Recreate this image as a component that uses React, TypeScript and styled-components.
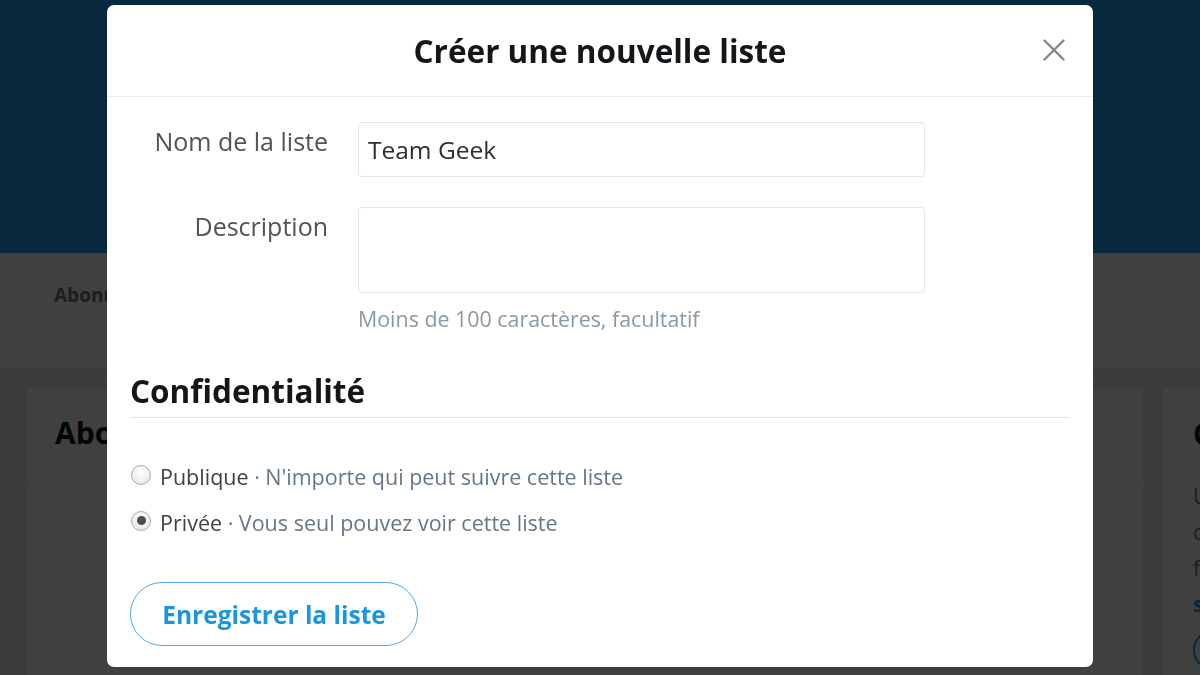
import React from 'react'
import styled, { createGlobalStyle } from 'styled-components'

const GlobalStyle = createGlobalStyle`
  html, body {
    margin: 0;
    padding: 0;
    width: 1200px;
    height: 675px;
    overflow: hidden;
    font-family: 'Open Sans', 'Noto Sans', 'Liberation Sans', sans-serif;
  }
  * { box-sizing: border-box; }
`

/* ---------- page behind the dialog ---------- */

const Page = styled.div`
  width: 1200px;
  height: 675px;
  background: #e6ecf0;
  display: flex;
  flex-direction: column;
`
const Banner = styled.div`
  height: 253px;
  background: #1da1f2;
`
const NavBar = styled.div`
  height: 116px;
  background: #fff;
  border-bottom: 1px solid #d8dee3;
  padding: 24px 0 0 54px;
`
const NavItem = styled.div`
  font-size: 19px;
  font-weight: 700;
  color: #657786;
  line-height: 36px;
`
const Main = styled.div`
  flex: 1;
  display: flex;
  gap: 20px;
  padding: 19px 0 0 27px;
`
const WideCard = styled.div`
  flex: 0 0 1116px;
  background: #fff;
  display: flex;
  flex-direction: column;
`
const CardHeader = styled.div`
  height: 99px;
  padding: 24px 0 0 28px;
  border-bottom: 1px solid #e6ecf0;
  font-size: 30px;
  font-weight: 700;
  color: #14171a;
`
const SideCard = styled.div`
  flex: 1;
  min-width: 0;
  overflow: hidden;
  background: #fff;
  padding: 24px 0 0 30px;
  display: flex;
  flex-direction: column;
`
const SideTitle = styled.div`
  font-size: 30px;
  font-weight: 700;
  color: #14171a;
  line-height: 44px;
  margin-bottom: 22px;
`
const SideLine = styled.div<{ $link?: boolean }>`
  font-size: 21px;
  line-height: 36px;
  color: ${(p) => (p.$link ? '#1b95e0' : '#657786')};
  font-weight: ${(p) => (p.$link ? 700 : 400)};
  white-space: nowrap;
`
const SideCircle = styled.div`
  margin-top: 8px;
  width: 40px;
  height: 40px;
  flex: 0 0 40px;
  border: 2px solid #1da1f2;
  border-radius: 20px;
`

/* ---------- dialog ---------- */

const Overlay = styled.div`
  position: fixed;
  inset: 0;
  background: rgba(0, 0, 0, 0.75);
  display: flex;
  justify-content: center;
  align-items: flex-start;
  padding-top: 5px;
`
const Dialog = styled.div`
  width: 986px;
  height: 662px;
  background: #fff;
  border-radius: 7px;
  overflow: hidden;
  display: flex;
  flex-direction: column;
`
const Header = styled.div`
  height: 92px;
  flex: 0 0 92px;
  border-bottom: 1px solid #e6ecf0;
  display: grid;
  grid-template-columns: 80px 1fr 80px;
  align-items: center;
`
const Title = styled.h2`
  grid-column: 2;
  margin: 0;
  text-align: center;
  font-size: 31.5px;
  font-weight: 700;
  color: #14171a;
`
const CloseButton = styled.button`
  justify-self: center;
  margin-left: 2px;
  margin-top: -2px;
  border: 0;
  background: transparent;
  padding: 0;
  width: 24px;
  height: 24px;
  display: flex;
  align-items: center;
  justify-content: center;
  cursor: pointer;
`
const Body = styled.div`
  padding: 25px 23px 0 23px;
  display: flex;
  flex-direction: column;
`
const FieldRow = styled.div`
  display: grid;
  grid-template-columns: 198px 567px;
  column-gap: 30px;
  margin-bottom: 30px;
`
const Label = styled.label`
  text-align: right;
  font-size: 25px;
  line-height: 32px;
  padding-top: 3px;
  color: #4f5459;
  white-space: nowrap;
`
const Input = styled.div<{ $tall?: boolean }>`
  height: ${(p) => (p.$tall ? '86px' : '55px')};
  border: 1px solid #e1e8ed;
  border-radius: 4px;
  padding: 10px 9px;
  font-size: 24.5px;
  line-height: 34px;
  color: #292f33;
`
const Help = styled.div`
  font-size: 21.4px;
  line-height: 29px;
  color: #8899a6;
  margin-top: 11px;
  white-space: nowrap;
`
const FieldStack = styled.div`
  display: flex;
  flex-direction: column;
`
const SectionTitle = styled.h3`
  margin: 8px 0 0 0;
  padding-bottom: 6px;
  border-bottom: 1px solid #e1e8ed;
  font-size: 31.5px;
  font-weight: 700;
  color: #14171a;
  line-height: 40px;
`
const Options = styled.div`
  margin-top: 44px;
  display: flex;
  flex-direction: column;
  gap: 16px;
`
const Option = styled.label`
  display: flex;
  align-items: center;
  gap: 9px;
  font-size: 21.5px;
  line-height: 30px;
  color: #657786;
  white-space: nowrap;
`
const Radio = styled.span<{ $checked?: boolean }>`
  flex: 0 0 20px;
  width: 20px;
  height: 20px;
  margin-left: 1px;
  border-radius: 50%;
  border: 1px solid #a9a9a9;
  background: radial-gradient(circle at 50% 35%, #ffffff 0%, #e3e3e3 100%);
  display: flex;
  align-items: center;
  justify-content: center;
  margin-top: -5px;
  &::after {
    content: '';
    display: ${(p) => (p.$checked ? 'block' : 'none')};
    width: 9px;
    height: 9px;
    border-radius: 50%;
    background: #4d4d4d;
  }
`
const OptionName = styled.span`
  color: #3d4247;
`
const SaveButton = styled.button`
  margin-top: 44px;
  align-self: flex-start;
  width: 288px;
  height: 64px;
  border-radius: 32px;
  border: 1.5px solid #4fa9e0;
  background: #fff;
  color: #1b95e0;
  font-family: inherit;
  font-size: 24.5px;
  font-weight: 700;
  cursor: pointer;
  white-space: nowrap;
`

function CloseIcon() {
  return (
    <svg width="22" height="22" viewBox="0 0 22 22">
      <path
        d="M1.5 1.5 L20.5 20.5 M20.5 1.5 L1.5 20.5"
        stroke="#7f8a93"
        strokeWidth="2.4"
        strokeLinecap="round"
        fill="none"
      />
    </svg>
  )
}

export default function App() {
  return (
    <>
      <GlobalStyle />
      <Page>
        <Banner />
        <NavBar>
          <NavItem>Abonnements</NavItem>
        </NavBar>
        <Main>
          <WideCard>
            <CardHeader>Abonnements</CardHeader>
          </WideCard>
          <SideCard>
            <SideTitle>Créer</SideTitle>
            <SideLine>Utilisez</SideLine>
            <SideLine>comptes</SideLine>
            <SideLine>fils</SideLine>
            <SideLine $link>s</SideLine>
            <SideCircle />
          </SideCard>
        </Main>
      </Page>

      <Overlay>
        <Dialog role="dialog">
          <Header>
            <Title>Créer une nouvelle liste</Title>
            <CloseButton aria-label="Fermer">
              <CloseIcon />
            </CloseButton>
          </Header>
          <Body>
            <FieldRow>
              <Label>Nom de la liste</Label>
              <Input>Team Geek</Input>
            </FieldRow>
            <FieldRow>
              <Label>Description</Label>
              <FieldStack>
                <Input $tall />
                <Help>Moins de 100 caractères, facultatif</Help>
              </FieldStack>
            </FieldRow>
            <SectionTitle>Confidentialité</SectionTitle>
            <Options>
              <Option>
                <Radio />
                <span>
                  <OptionName>Publique</OptionName> · N'importe qui peut suivre
                  cette liste
                </span>
              </Option>
              <Option>
                <Radio $checked />
                <span>
                  <OptionName>Privée</OptionName> · Vous seul pouvez voir cette
                  liste
                </span>
              </Option>
            </Options>
            <SaveButton>Enregistrer la liste</SaveButton>
          </Body>
        </Dialog>
      </Overlay>
    </>
  )
}
